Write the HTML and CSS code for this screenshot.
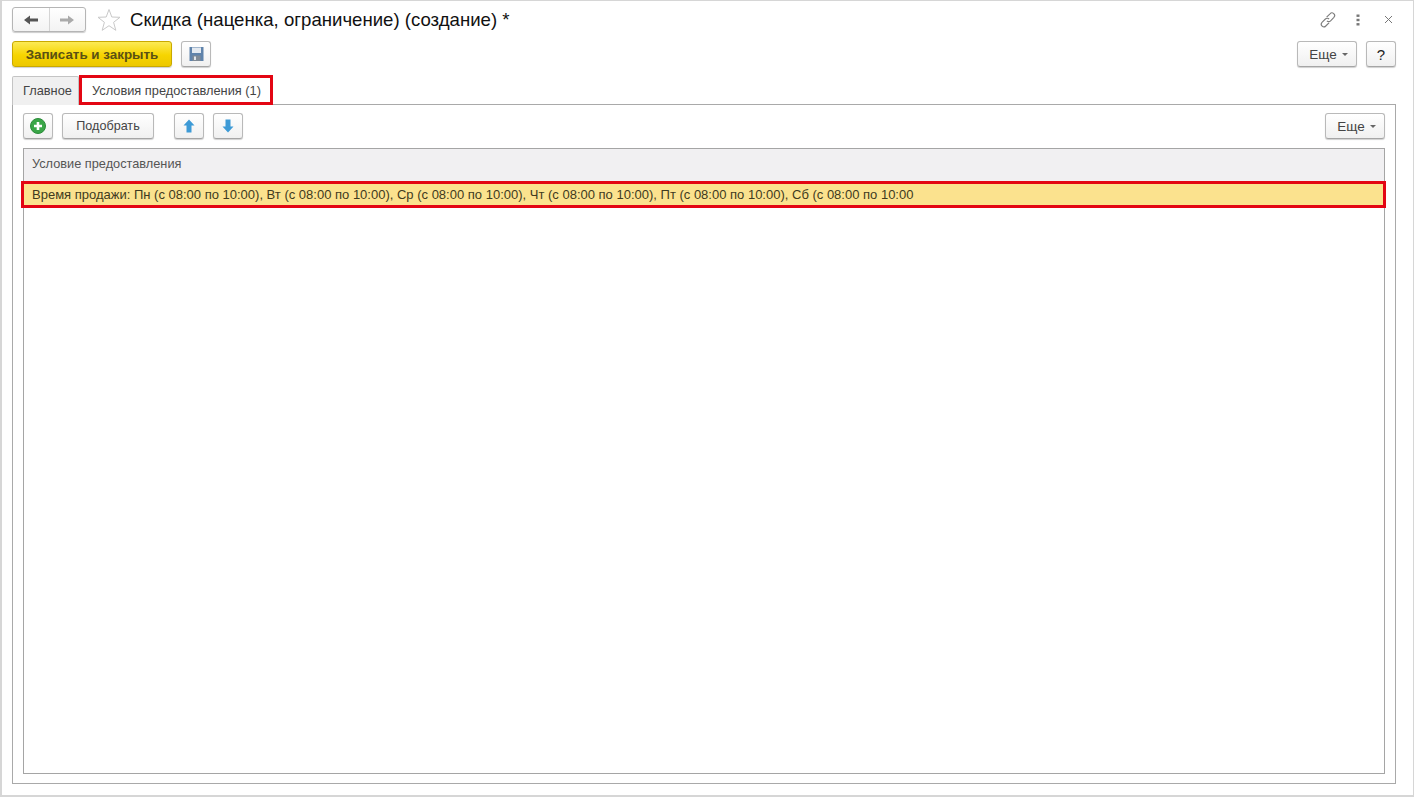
FILE: index.html
```html
<!DOCTYPE html>
<html lang="ru">
<head>
<meta charset="utf-8">
<title>Скидка</title>
<link rel="stylesheet" href="styles.css">
</head>
<body>
<div class="window">
  <header class="titlebar">
    <div class="nav-group">
      <button class="nav-btn nav-back"><svg width="16" height="12" viewBox="0 0 16 12"><path d="M1 6 L7 1.5 V4.5 H15 V7.5 H7 V10.5 Z" fill="#555"/></svg></button>
      <button class="nav-btn"><svg width="16" height="12" viewBox="0 0 16 12"><path d="M15 6 L9 1.5 V4.5 H1 V7.5 H9 V10.5 Z" fill="#aaa"/></svg></button>
    </div>
    <svg class="star" width="24" height="24" viewBox="0 0 24 24"><path d="M12 1.5 L14.8 9 L23 9.3 L16.6 14.3 L18.8 22.3 L12 17.7 L5.2 22.3 L7.4 14.3 L1 9.3 L9.2 9 Z" fill="#fff" stroke="#c9c9c9" stroke-width="1"/></svg>
    <h1 class="title">Скидка (наценка, ограничение) (создание) *</h1>
    <div class="win-actions">
      <svg width="18" height="18" viewBox="0 0 18 18" fill="none" stroke="#7d7d7d" stroke-width="1.1"><path d="M7.6 6.2 L11 2.8 a2.6 2.6 0 0 1 3.9 3.6 L11.6 9.8 a2.6 2.6 0 0 1 -3.7 0"/><path d="M10.2 11.6 L6.8 15 a2.6 2.6 0 0 1 -3.8 -3.6 L6.4 8 a2.6 2.6 0 0 1 3.7 0"/></svg>
      <svg class="dots" width="4" height="12" viewBox="0 0 4 12" fill="#777"><rect x="0.5" y="0.5" width="3" height="2.4"/><rect x="0.5" y="4.8" width="3" height="2.4"/><rect x="0.5" y="9.1" width="3" height="2.4"/></svg>
      <svg width="9" height="9" viewBox="0 0 9 9" stroke="#777" stroke-width="1"><path d="M1 1 L8 8 M8 1 L1 8"/></svg>
    </div>
  </header>
  <div class="toolbar">
    <button class="btn btn-primary">Записать и закрыть</button>
    <button class="btn btn-icon"><svg width="15" height="16" viewBox="0 0 15 16"><path d="M0.5 1 H14.5 V15 H0.5 Z" fill="#5f83ab"/><rect x="3" y="1.5" width="9" height="5.5" fill="#e3e9f0"/><rect x="3.5" y="9.5" width="8" height="5.5" fill="#7f8a96"/><rect x="5" y="10.5" width="2" height="3.5" fill="#dfe4ea"/></svg></button>
    <div class="spacer"></div>
    <button class="btn btn-more">Еще<span class="caret"></span></button>
    <button class="btn btn-help">?</button>
  </div>
  <nav class="tabs">
    <div class="tab">Главное</div>
    <div class="tab tab-active">Условия предоставления (1)</div>
  </nav>
  <section class="panel">
    <div class="panel-toolbar">
      <button class="btn btn-icon btn-add"><svg width="16" height="16" viewBox="0 0 16 16"><circle cx="8" cy="8" r="7.5" fill="#3aa648"/><circle cx="8" cy="8" r="7.5" fill="none" stroke="#2b8c3a"/><path d="M8 4 V12 M4 8 H12" stroke="#fff" stroke-width="2.6"/></svg></button>
      <button class="btn btn-pick">Подобрать</button>
      <button class="btn btn-icon btn-up"><svg width="12" height="14" viewBox="0 0 12 14"><path d="M6 0.5 L11.5 6.5 H8.5 V13.5 H3.5 V6.5 H0.5 Z" fill="#3d9ad6"/></svg></button>
      <button class="btn btn-icon btn-down"><svg width="12" height="14" viewBox="0 0 12 14"><path d="M6 13.5 L11.5 7.5 H8.5 V0.5 H3.5 V7.5 H0.5 Z" fill="#3d9ad6"/></svg></button>
      <div class="spacer"></div>
      <button class="btn btn-more">Еще<span class="caret"></span></button>
    </div>
    <div class="table">
      <div class="table-head">Условие предоставления</div>
      <div class="table-row">Время продажи: Пн (с 08:00 по 10:00), Вт (с 08:00 по 10:00), Ср (с 08:00 по 10:00), Чт (с 08:00 по 10:00), Пт (с 08:00 по 10:00), Сб (с 08:00 по 10:00</div>
    </div>
  </section>
</div>
</body>
</html>
```
FILE: styles.css
```css
* { box-sizing: border-box; }
html, body { height: 100%; }
body {
  margin: 0;
  background: #fff;
  font-family: "Liberation Sans", Arial, sans-serif;
  font-size: 12.8px;
  color: #333;
}
button { font-family: inherit; padding: 0; margin: 0; cursor: default; }
svg { display: block; }

.window {
  width: 1414px;
  height: 797px;
  display: flex;
  flex-direction: column;
  padding: 6px 17px 11px 10px;
  border: 1px solid #d6d6d6;
  border-width: 1px 1px 2px 2px;
}

.titlebar {
  display: flex;
  align-items: center;
  height: 25px;
  flex: none;
}
.nav-group {
  display: flex;
  width: 74px;
  height: 25px;
  border: 1px solid #b5b5b5;
  border-radius: 3px;
  background: linear-gradient(#fff, #f3f3f3);
  box-shadow: 0 1px 1px #ccc;
}
.nav-btn {
  flex: 1;
  border: 0;
  background: none;
  display: flex;
  align-items: center;
  justify-content: center;
}
.nav-back { border-right: 1px solid #d5d5d5; }
.star { margin-left: 11px; }
.title {
  margin: 0 0 0 9px;
  font-size: 18.6px;
  font-weight: 400;
  color: #111;
}
.win-actions {
  margin-left: auto;
  display: flex;
  align-items: center;
  gap: 19px;
  margin-right: 3px;
}
.dots { margin-right: 5px; }

.toolbar {
  display: flex;
  align-items: flex-start;
  gap: 9px;
  margin-top: 9px;
  height: 26px;
  flex: none;
}
.spacer { flex: 1; }
.btn {
  height: 26px;
  border: 1px solid #b9b9b9;
  border-bottom-color: #a5a5a5;
  border-radius: 3px;
  background: linear-gradient(#fff, #f0f0f0);
  box-shadow: 0 1px 1px #d0d0d0;
  font-size: 12.6px;
  color: #444;
  display: flex;
  align-items: center;
  justify-content: center;
}
.btn-primary {
  width: 160px;
  background: linear-gradient(#fcea55, #f6d400 55%, #edc800);
  border-color: #c9a900;
  font-size: 13.4px;
  font-weight: 700;
  color: #5a5014;
}
.btn-icon { width: 30px; }
.btn-more { width: 60px; font-size: 13.5px; gap: 5px; padding-left: 3px; }
.btn-help { width: 30px; font-size: 15px; color: #222; }
.caret {
  width: 0;
  height: 0;
  border: 3px solid transparent;
  border-top: 3px solid #666;
  border-bottom: 0;
}

.tabs {
  display: flex;
  height: 30px;
  margin-top: 8px;
  flex: none;
  position: relative;
  z-index: 1;
}
.tab {
  width: 67px;
  margin-top: 1px;
  padding-top: 6px;
  padding-left: 10px;
  border: 1px solid #c4c4c4;
  border-bottom: 0;
  background: #f0f0f0;
  color: #444;
  border-radius: 2px 2px 0 0;
  white-space: nowrap;
}
.tab-active {
  width: 194px;
  margin-top: 0;
  padding-top: 5px;
  padding-left: 10px;
  background: #fff;
  border: 3px solid #e30613;
  border-radius: 0;
  height: 30px;
  line-height: 15px;
  color: #444;
}

.panel {
  flex: 1;
  margin-top: -1px;
  border: 1px solid #a9a9a9;
  padding: 8px 10px 9px 10px;
  display: flex;
  flex-direction: column;
  min-height: 0;
}
.panel-toolbar {
  display: flex;
  align-items: flex-start;
  height: 26px;
  flex: none;
}
.btn-add { margin-right: 9px; }
.btn-pick { width: 92px; margin-right: 20px; }
.btn-up { margin-right: 9px; }

.table {
  flex: 1;
  margin-top: 9px;
  border: 1px solid #a5a5a5;
  min-height: 0;
}
.table-head {
  height: 32px;
  background: #f1f0f2;
  padding: 7px 0 0 8px;
  color: #555;
  font-size: 12.75px;
}
.table-row {
  height: 27px;
  margin: 0 -2px 0 -3px;
  padding: 4px 0 0 8px;
  background: #fbe28e;
  border: 3px solid #e30613;
  font-size: 13px;
  line-height: 14px;
  color: #403a20;
  white-space: nowrap;
}
```
